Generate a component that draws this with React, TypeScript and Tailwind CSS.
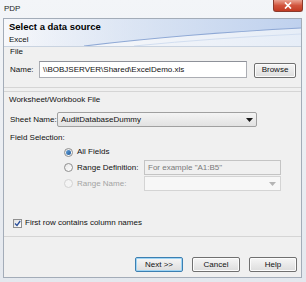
import React from 'react';

const font = { fontFamily: '"Liberation Sans", Arial, sans-serif' };

const Radio: React.FC<{ checked?: boolean; disabled?: boolean }> = ({ checked, disabled }) => (
  <span
    className={`flex h-[9px] w-[9px] items-center justify-center rounded-full border ${
      disabled ? 'border-[#d2d2d2] bg-[#f4f4f4]' : 'border-[#8f8f8f] bg-gradient-to-br from-[#e6e6e6] to-[#ffffff]'
    }`}
  >
    {checked && <span className="h-[5px] w-[5px] rounded-full bg-gradient-to-br from-[#6aa4d8] to-[#1d5a9c]" />}
  </span>
);

const Arrow: React.FC<{ light?: boolean }> = ({ light }) => (
  <svg width="7" height="4" viewBox="0 0 7 4">
    <path d="M0 0 L7 0 L3.5 4 Z" fill={light ? '#b4b4b4' : '#1a1a1a'} />
  </svg>
);

const PushButton: React.FC<{ label: string; primary?: boolean }> = ({ label, primary }) => (
  <button
    className={`flex h-[15px] w-[48px] items-center justify-center rounded-[2px] border bg-gradient-to-b from-[#f6f6f6] to-[#dddddd] text-[8px] text-[#111111] ${
      primary ? 'border-[#3c7fb1] shadow-[inset_0_0_0_1px_#9fd5f5]' : 'border-[#707070] shadow-[inset_0_0_0_1px_#fcfcfc]'
    }`}
  >
    {label}
  </button>
);

export default function App() {
  return (
    <div className="flex h-[282px] w-[306px] flex-col bg-gradient-to-b from-[#f3f5f8] to-[#e4e8ee]" style={font}>
      {/* title bar */}
      <div className="flex h-[18px] items-start justify-between">
        <span className="pl-[4px] pt-[4px] text-[8px] leading-[10px] text-[#1e1e1e]">PDP</span>
        <div className="mr-[3px] flex h-[12px] w-[30px] items-center justify-center rounded-b-[3px] border border-t-0 border-[#8b3a2c] bg-gradient-to-b from-[#e9a292] via-[#d1543d] to-[#c23a22]">
          <svg width="8" height="7" viewBox="0 0 8 7">
            <path d="M1 0.5 L7 6.5 M7 0.5 L1 6.5" stroke="#ffffff" strokeWidth="1.7" />
          </svg>
        </div>
      </div>

      {/* dialog panel */}
      <div className="ml-[3px] mr-[4px] flex h-[260px] flex-col border border-[#a3acb8] bg-[#f0f0f0]">
        {/* header */}
        <div className="relative h-[28px] overflow-hidden border-b border-[#c9d3e0] bg-gradient-to-r from-[#f7f8fb] via-[#f1f4f9] to-[#e6edf7]">
          <svg className="absolute inset-0" width="297" height="27" viewBox="0 0 297 27">
            <defs>
              <linearGradient id="band" x1="0" y1="0" x2="1" y2="0">
                <stop offset="0" stopColor="#c9d8ef" stopOpacity="0" />
                <stop offset="0.55" stopColor="#c9d8ef" stopOpacity="0.7" />
                <stop offset="1" stopColor="#bfd1ee" stopOpacity="1" />
              </linearGradient>
            </defs>
            <path d="M0 0 L297 0 L297 9 Q180 15 80 27 L0 27 Z" fill="url(#band)" />
            <path d="M80 27 Q180 15 297 9" stroke="#8ea8d5" strokeWidth="1.2" fill="none" />
            <path d="M130 27 Q210 19 297 15" stroke="#d2def0" strokeWidth="1" fill="none" />
          </svg>
          <div className="relative pl-[5px] pt-[2px] text-[9.5px] font-bold leading-[12px] text-[#000000]">
            Select a data source
          </div>
          <div className="relative pl-[5px] pt-[2px] text-[8px] leading-[10px] text-[#111111]">Excel</div>
        </div>

        {/* File group */}
        <div className="flex flex-col border-b border-[#d5d5d5] pb-[9px] text-[8px] text-[#111111]">
          <div className="pl-[6px] leading-[10px]">File</div>
          <div className="mt-[4px] flex h-[17px] items-center">
            <span className="w-[35px] pl-[6px]">Name:</span>
            <div className="flex h-[17px] w-[208px] items-center border border-[#abadb3] border-t-[#8e9199] bg-white pl-[3px]">
              \\BOBJSERVER\Shared\ExcelDemo.xls
            </div>
            <div className="ml-[7px] mt-[1px]">
              <button className="flex h-[15px] w-[42px] items-center justify-center rounded-[2px] border border-[#707070] bg-gradient-to-b from-[#f6f6f6] to-[#dddddd] shadow-[inset_0_0_0_1px_#fcfcfc]">
                Browse
              </button>
            </div>
          </div>
        </div>

        {/* Worksheet group */}
        <div className="mt-[3px] flex flex-col border-y border-[#d5d5d5] pb-[8px] text-[8px] text-[#111111]">
          <div className="mt-[3px] pl-[5px] leading-[10px]">Worksheet/Workbook File</div>
          <div className="mt-[7px] flex h-[15px] items-center">
            <span className="w-[53px] pl-[6px]">Sheet Name:</span>
            <div className="flex h-[15px] w-[200px] items-center justify-between rounded-[2px] border border-[#a0a0a0] bg-gradient-to-b from-[#f4f4f4] to-[#e2e2e2] pl-[3px] pr-[3px]">
              <span>AuditDatabaseDummy</span>
              <Arrow />
            </div>
          </div>
          <div className="mt-[6px] pl-[6px] leading-[10px]">Field Selection:</div>
          <div className="mt-[3px] flex h-[12px] items-center pl-[60px]">
            <Radio checked />
            <span className="ml-[4px]">All Fields</span>
          </div>
          <div className="mt-[2px] flex h-[15px] items-center pl-[60px]">
            <Radio />
            <span className="ml-[4px] w-[67px]">Range Definition:</span>
            <div className="flex h-[15px] w-[137px] items-center border border-[#c4c4c4] bg-[#f0f0f0] pl-[3px] text-[#7a7a7a]">
              For example "A1:B5"
            </div>
          </div>
          <div className="mt-[1px] flex h-[15px] items-center pl-[60px]">
            <Radio disabled />
            <span className="ml-[4px] w-[67px] text-[#a3a3a3]">Range Name:</span>
            <div className="flex h-[15px] w-[137px] items-center justify-end border border-[#d4d4d4] bg-[#f7f7f7] pr-[4px]">
              <Arrow light />
            </div>
          </div>
          <div className="mt-[27px] flex h-[10px] items-center pl-[9px]">
            <span className="flex h-[9px] w-[9px] items-center justify-center border border-[#8f8f8f] bg-gradient-to-br from-[#e2e2e2] to-white">
              <svg width="7" height="7" viewBox="0 0 7 7">
                <path d="M1 3.5 L3 5.5 L6.2 1" stroke="#2a4f9a" strokeWidth="1.3" fill="none" />
              </svg>
            </span>
            <span className="ml-[3px]">First row contains column names</span>
          </div>
        </div>

        {/* buttons */}
        <div className="mt-[20px] flex justify-end gap-[9px] pr-[4px]">
          <PushButton label="Next >>" primary />
          <PushButton label="Cancel" />
          <PushButton label="Help" />
        </div>
      </div>
    </div>
  );
}
